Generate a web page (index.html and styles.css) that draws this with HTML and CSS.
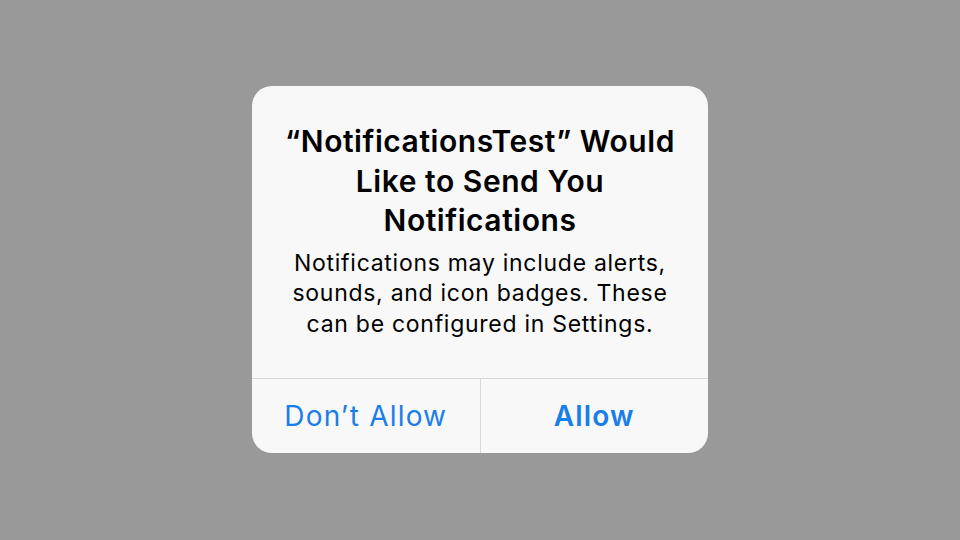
FILE: index.html
```html
<!DOCTYPE html>
<html lang="en">
<head>
<meta charset="utf-8">
<title>Notifications</title>
<link rel="stylesheet" href="styles.css">
</head>
<body>
<div class="stage">
  <div class="alert">
    <div class="content">
      <h1 class="title">“NotificationsTest” Would Like to Send You Notifications</h1>
      <p class="message">Notifications may include alerts, sounds, and icon badges. These can be configured in Settings.</p>
    </div>
    <div class="actions">
      <button class="action">Don’t Allow</button>
      <button class="action action-primary">Allow</button>
    </div>
  </div>
</div>
</body>
</html>
```
FILE: styles.css
```css
html, body {
  margin: 0;
  padding: 0;
}
body {
  background: #999999;
  font-family: Inter, "Open Sans", "Noto Sans", sans-serif;
}
.stage {
  width: 960px;
  height: 540px;
  display: flex;
  justify-content: center;
  align-items: flex-start;
  padding-top: 86px;
  box-sizing: border-box;
}
.alert {
  width: 456px;
  background: #f8f8f8;
  border-radius: 20px;
  overflow: hidden;
  display: flex;
  flex-direction: column;
}
.content {
  padding: 36px 20px 39px;
  text-align: center;
}
.title {
  margin: 0;
  font-size: 30px;
  line-height: 39.5px;
  font-weight: 600;
  color: #000;
  letter-spacing: 0.55px;
}
.message {
  margin: 7px 0 0;
  font-size: 23px;
  line-height: 30.5px;
  font-weight: 400;
  color: #000;
  letter-spacing: 0.72px;
}
.actions {
  display: flex;
  border-top: 1px solid #d8d8d8;
  height: 74px;
}
.action {
  flex: 1;
  border: none;
  background: transparent;
  font-family: inherit;
  font-size: 28px;
  color: #1a7ee9;
  font-weight: 400;
  letter-spacing: 1.2px;
  padding: 0;
  margin: 0;
}
.action + .action {
  border-left: 1px solid #d8d8d8;
}
.action-primary {
  font-weight: 600;
}
```
